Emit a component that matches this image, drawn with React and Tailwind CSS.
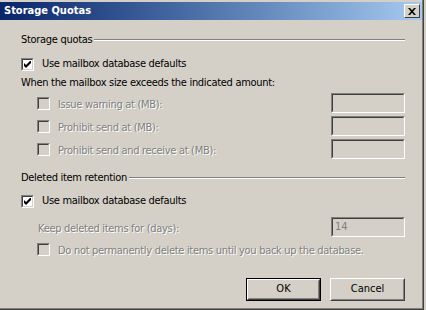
import React from 'react';

const font = { fontFamily: '"DejaVu Sans Condensed", "DejaVu Sans", Tahoma, sans-serif' };

function CheckBox({ checked, disabled }) {
  return (
    <div
      className={`w-[13px] h-[13px] shrink-0 border border-t-[#808080] border-l-[#808080] border-r-white border-b-white ${
        disabled ? 'bg-[#D4D0C8]' : 'bg-white'
      }`}
    >
      <div className="w-full h-full border border-t-[#404040] border-l-[#404040] border-r-[#D4D0C8] border-b-[#D4D0C8] flex items-center justify-center">
        {checked && (
          <svg width="7" height="7" viewBox="0 0 7 7">
            <path d="M0 2 L0 5 L2 7 L7 2 L7 -1 L2 4 Z" fill="#000" />
          </svg>
        )}
      </div>
    </div>
  );
}

function TextBox({ value }) {
  return (
    <div className="w-[74px] h-[20px] border border-t-[#808080] border-l-[#808080] border-r-white border-b-white">
      <div className="w-full h-full border border-t-[#404040] border-l-[#404040] border-r-[#D4D0C8] border-b-[#D4D0C8] bg-[#D4D0C8] px-[2px] text-[11px] leading-[16px] text-[#808080]">
        {value}
      </div>
    </div>
  );
}

function GroupHeader({ label }) {
  return (
    <div className="flex items-center h-[16px] text-[11px] text-black tracking-[-0.3px]">
      <span className="pr-[2px]">{label}</span>
      <div className="flex-1 h-[2px] border-t border-t-[#808080] border-b border-b-white" />
    </div>
  );
}

function DisabledText({ children }) {
  return (
    <span className="text-[11px] tracking-[-0.3px] text-[#808080] [text-shadow:1px_1px_0_#fff]">{children}</span>
  );
}

function Button({ label, isDefault }) {
  return (
    <div className={`w-[75px] h-[23px] ${isDefault ? 'border border-black' : ''}`}>
      <div className="w-full h-full border border-t-white border-l-white border-r-[#404040] border-b-[#404040]">
        <div className="w-full h-full border border-t-[#D4D0C8] border-l-[#D4D0C8] border-r-[#808080] border-b-[#808080] flex items-center justify-center text-[11px] text-black">
          {label}
        </div>
      </div>
    </div>
  );
}

export default function App() {
  return (
    <div className="w-[426px] h-[310px] bg-[#D4D0C8] overflow-hidden" style={font}>
      <div className="w-[424px] h-[310px] pt-[2px] border-r border-b border-r-[#404040] border-b-[#404040] shadow-[inset_-1px_-1px_#808080]">
        {/* Title bar */}
        <div className="h-[18px] mr-[1px] flex items-center justify-between pl-[4px] pr-[2px] bg-gradient-to-r from-[#0A246A] to-[#A6CAF0]">
          <span className="text-white font-bold text-[11px]">Storage Quotas</span>
          <div className="w-[16px] h-[14px] bg-[#D4D0C8] border border-t-white border-l-white border-r-[#404040] border-b-[#404040] flex items-center justify-center">
            <svg width="8" height="7" viewBox="0 0 8 7">
              <path d="M0 0 L2 0 L4 2.2 L6 0 L8 0 L5 3.5 L8 7 L6 7 L4 4.8 L2 7 L0 7 L3 3.5 Z" fill="#000" />
            </svg>
          </div>
        </div>

        {/* Content */}
        <div className="pl-[21px] pr-[18px] text-black">
          <div className="mt-[12px]">
            <GroupHeader label="Storage quotas" />
          </div>

          <div className="mt-[8px] flex items-center h-[16px]">
            <CheckBox checked />
            <span className="ml-[8px] text-[11px] tracking-[-0.3px]">Use mailbox database defaults</span>
          </div>

          <div className="mt-[3px] h-[16px] flex items-center text-[11px] tracking-[-0.3px]">
            When the mailbox size exceeds the indicated amount:
          </div>

          <div className="mt-[2px] flex flex-col gap-[3px]">
            {['Issue warning at (MB):', 'Prohibit send at (MB):', 'Prohibit send and receive at (MB):'].map((l) => (
              <div key={l} className="h-[20px] flex items-center justify-between">
                <div className="flex items-center pl-[16px]">
                  <CheckBox disabled />
                  <span className="ml-[8px]">
                    <DisabledText>{l}</DisabledText>
                  </span>
                </div>
                <TextBox value="" />
              </div>
            ))}
          </div>

          <div className="mt-[11px]">
            <GroupHeader label="Deleted item retention" />
          </div>

          <div className="mt-[7px] flex items-center h-[16px]">
            <CheckBox checked />
            <span className="ml-[8px] text-[11px] tracking-[-0.3px]">Use mailbox database defaults</span>
          </div>

          <div className="mt-[8px] h-[20px] flex items-center justify-between">
            <div className="pl-[17px]">
              <DisabledText>Keep deleted items for (days):</DisabledText>
            </div>
            <TextBox value="14" />
          </div>

          <div className="mt-[4px] h-[16px] flex items-center pl-[16px]">
            <CheckBox disabled />
            <span className="ml-[8px]">
              <DisabledText>Do not permanently delete items until you back up the database.</DisabledText>
            </span>
          </div>

          <div className="mt-[21px] flex justify-end gap-[9px]">
            <Button label="OK" isDefault />
            <Button label="Cancel" />
          </div>
        </div>
      </div>
    </div>
  );
}
